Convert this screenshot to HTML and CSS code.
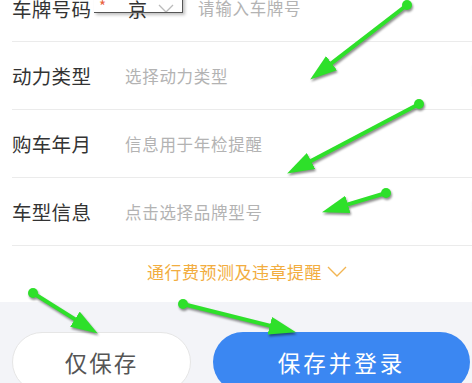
FILE: index.html
```html
<!DOCTYPE html>
<html lang="zh">
<head>
<meta charset="utf-8">
<link rel="stylesheet" href="styles.css">
</head>
<body>
<div class="page">
  <section class="form">
    <div class="row row-first">
      <span class="label">车牌号码</span>
      <span class="star">*</span>
      <span class="province">京</span>
      <svg class="caret" width="16" height="9" viewBox="0 0 16 9"><path d="M1 1 L8 8 L15 1" fill="none" stroke="#bbb" stroke-width="1.3"/></svg>
      <span class="plate-input">请输入车牌号</span>
      <span class="picker-box"></span>
    </div>
    <div class="row">
      <span class="label">动力类型</span>
      <span class="value">选择动力类型</span>
      <span class="more"></span>
    </div>
    <div class="row">
      <span class="label">购车年月</span>
      <span class="value">信息用于年检提醒</span>
    </div>
    <div class="row">
      <span class="label">车型信息</span>
      <span class="value">点击选择品牌型号</span>
      <span class="more"></span>
    </div>
    <div class="toggle">
      <span>通行费预测及违章提醒</span>
      <svg width="20" height="11" viewBox="0 0 20 11"><path d="M1 1 L10 10 L19 1" fill="none" stroke="#f2b552" stroke-width="1.4"/></svg>
    </div>
  </section>
  <section class="actions">
    <button class="btn btn-plain">仅保存</button>
    <button class="btn btn-primary">保存并登录</button>
  </section>

  <svg class="annotations" width="472" height="383" viewBox="0 0 472 383">
    <defs>
      <marker id="head" markerUnits="userSpaceOnUse" markerWidth="30" markerHeight="20" refX="6" refY="9" orient="auto">
        <path d="M0 0 L27 9 L0 18 Z" fill="#2ee02a"/>
      </marker>
    </defs>
    <g stroke="#2ee02a" stroke-width="4" fill="#2ee02a">
      <line x1="407" y1="5" x2="326.8" y2="66.8" marker-end="url(#head)"/>
      <circle cx="407" cy="5" r="5" stroke="none"/>
      <line x1="419" y1="104" x2="305.7" y2="163.7" marker-end="url(#head)"/>
      <circle cx="419" cy="104" r="5" stroke="none"/>
      <line x1="386" y1="193" x2="342.1" y2="206.2" marker-end="url(#head)"/>
      <circle cx="386" cy="193" r="5" stroke="none"/>
      <line x1="33" y1="293" x2="80" y2="322.4" marker-end="url(#head)"/>
      <circle cx="33" cy="293" r="5" stroke="none"/>
      <line x1="183" y1="304" x2="275.6" y2="327.1" marker-end="url(#head)"/>
      <circle cx="183" cy="304" r="5" stroke="none"/>
    </g>
  </svg>
</div>
</body>
</html>
```
FILE: styles.css
```css
html, body {
  margin: 0;
  padding: 0;
  width: 472px;
  height: 383px;
  overflow: hidden;
  background: #f3f4f8;
  font-family: "Noto Sans CJK SC", "Noto Sans", sans-serif;
}

.page {
  position: relative;
  width: 472px;
  height: 383px;
  overflow: hidden;
}

.form {
  background: #ffffff;
  margin-top: -25px;
}

.row {
  position: relative;
  display: flex;
  align-items: center;
  height: 67px;
  margin-left: 12px;
  border-bottom: 1px solid #ebebeb;
}

.row-first {
  height: 66px;
}

.label {
  width: 80px;
  font-size: 19.5px;
  color: #333333;
  letter-spacing: 0.3px;
  white-space: nowrap;
}

.value {
  margin-left: 33px;
  font-size: 16.5px;
  color: #b3b3b3;
  letter-spacing: 0.7px;
}

.more {
  margin-left: auto;
  margin-right: -6px;
  width: 8px;
  height: 22px;
  background: linear-gradient(90deg, rgba(0,0,0,0), #ececec);
  border-radius: 3px;
}

.star {
  position: relative;
  top: -3px;
  margin-left: 7px;
  font-size: 15px;
  color: #e8603c;
}

.province {
  margin-left: 22px;
  font-size: 19px;
  color: #333333;
}

.caret {
  margin-left: 11px;
}

.plate-input {
  margin-left: 24px;
  font-size: 16.5px;
  color: #b3b3b3;
  letter-spacing: 0.7px;
}

.picker-box {
  position: absolute;
  left: 82px;
  top: 0;
  width: 88px;
  height: 37px;
  border-right: 1.5px solid #555555;
  border-bottom: 1.5px solid #555555;
  box-shadow: 2px 2px 3px rgba(0, 0, 0, 0.25);
  pointer-events: none;
}

.toggle {
  display: flex;
  align-items: center;
  justify-content: center;
  gap: 5px;
  height: 56px;
  padding-left: 22px;
  padding-bottom: 5px;
  box-sizing: border-box;
  font-size: 17px;
  color: #f2ad3f;
  letter-spacing: 0.5px;
}

.actions {
  display: flex;
  gap: 22px;
  padding: 30px 2px 0 12px;
}

.btn {
  height: 60px;
  border-radius: 30px;
  font-family: inherit;
  font-size: 22.5px;
  flex-shrink: 0;
  padding: 0;
}

.btn-plain {
  width: 179px;
  background: #ffffff;
  border: 1px solid #e6e6e6;
  color: #555555;
  letter-spacing: 2px;
}

.btn-primary {
  width: 257px;
  background: #3b87f2;
  border: none;
  color: #ffffff;
  letter-spacing: 3px;
}

.annotations {
  position: absolute;
  left: 0;
  top: 0;
  filter: drop-shadow(1px 2px 1.2px rgba(0, 0, 0, 0.45));
  pointer-events: none;
}
```
